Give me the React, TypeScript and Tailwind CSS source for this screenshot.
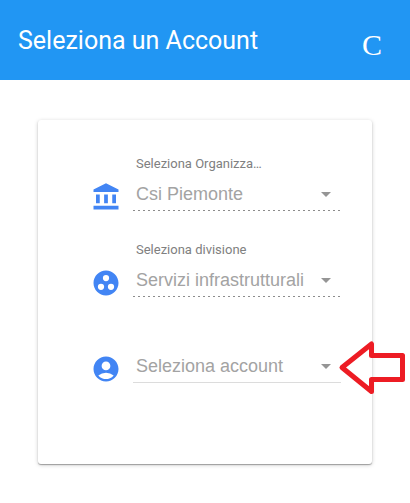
import { MdAccountBalance, MdAccountCircle, MdGroupWork } from "react-icons/md";
import type { IconType } from "react-icons";

type FieldProps = {
  id: string;
  label: string;
  value: string;
  Icon: IconType;
  locked?: boolean;
};

function AccountField({ id, label, value, Icon, locked = false }: FieldProps) {
  return (
    <div className="flex items-end gap-3">
      <Icon className="-mb-px size-[30px] shrink-0 text-[#4285f4]" aria-hidden="true" />
      <div className="min-w-0 flex-1">
        <label
          htmlFor={id}
          className={
            locked
              ? "block pl-[3px] font-['Roboto',sans-serif] text-[13px] leading-5 text-[#808080]"
              : "block h-5 leading-5 opacity-0"
          }
        >
          {label}
        </label>
        <div className="relative mt-1">
          <select
            id={id}
            disabled={locked}
            defaultValue={value}
            className="block h-8 w-full appearance-none bg-transparent pr-8 pl-[3px] font-['Liberation_Sans',Arial,sans-serif] text-[18px] text-[#a3a3a3] opacity-100 outline-none"
          >
            <option>{value}</option>
          </select>
          <svg
            viewBox="0 0 10 5"
            className="pointer-events-none absolute top-[14px] right-[10px] h-[5px] w-[10px] fill-[#959595]"
            aria-hidden="true"
          >
            <path d="M0 0h10L5 5z" />
          </svg>
          <div
            className={
              locked
                ? "h-px bg-[linear-gradient(to_right,#8c8c8c_0,#8c8c8c_2px,transparent_2px)] bg-[length:5px_1px] bg-repeat-x"
                : "h-px bg-[#dcdcdc]"
            }
          />
        </div>
      </div>
    </div>
  );
}

export default function App() {
  return (
    <div className="bg-white">
      <header className="flex h-20 items-center justify-between bg-[#2196f3] pt-0.5 pr-7 pl-[18px] text-white">
        <h1 className="font-['Roboto',sans-serif] text-[25px] leading-8">Seleziona un Account</h1>
        <button
          type="button"
          aria-label="Aggiorna"
          className="mt-2 font-['Liberation_Serif',serif] text-[30px] leading-8"
        >
          C
        </button>
      </header>
      <main className="px-[38px] py-10">
        <form className="relative flex flex-col gap-[29px] rounded-[3px] bg-white pt-[34px] pr-[31px] pb-[81px] pl-[53px] shadow-[0_1px_4px_rgba(0,0,0,0.2),0_1px_1px_rgba(0,0,0,0.3)]">
          <AccountField id="org" label="Seleziona Organizza…" value="Csi Piemonte" Icon={MdAccountBalance} locked />
          <AccountField id="div" label="Seleziona divisione" value="Servizi infrastrutturali" Icon={MdGroupWork} locked />
          <AccountField id="account" label="Account" value="Seleziona account" Icon={MdAccountCircle} />
          <svg
            viewBox="0 0 68 55"
            className="pointer-events-none absolute top-[220px] -right-[34px] h-[55px] w-[68px]"
            aria-hidden="true"
          >
            <path
              d="M4 27.5 33.5 4v11.5h31v24h-31v12z"
              fill="none"
              stroke="#ed1c24"
              strokeWidth="5"
              strokeLinejoin="round"
            />
          </svg>
        </form>
      </main>
    </div>
  );
}
